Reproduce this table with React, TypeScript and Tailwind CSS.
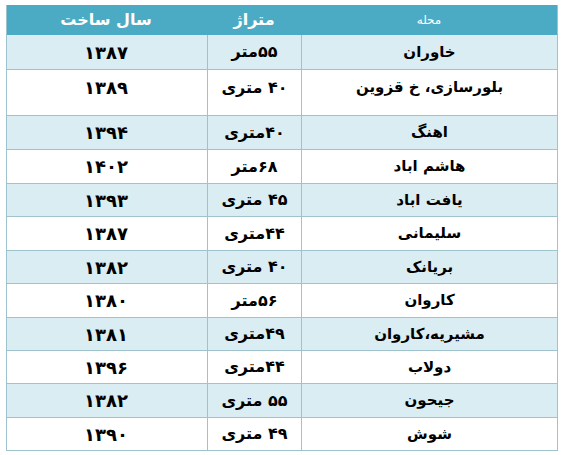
const rows: { area: string; size: string; year: string; h: string; extra?: string }[] = [
  { area: "خاوران", size: "۵۵متر", year: "۱۳۸۷", h: "h-[34px]" },
  { area: "بلورسازی، خ قزوین", size: "۴۰ متری", year: "۱۳۸۹", h: "h-[46px]", extra: "pb-[10px]" },
  { area: "اهنگ", size: "۴۰متری", year: "۱۳۹۴", h: "h-[34px]" },
  { area: "هاشم اباد", size: "۶۸متر", year: "۱۴۰۲", h: "h-[34px]" },
  { area: "یافت اباد", size: "۴۵ متری", year: "۱۳۹۳", h: "h-[33px]" },
  { area: "سلیمانی", size: "۴۴متری", year: "۱۳۸۷", h: "h-[34px]" },
  { area: "بریانک", size: "۴۰ متری", year: "۱۳۸۲", h: "h-[33px]" },
  { area: "کاروان", size: "۵۶متر", year: "۱۳۸۰", h: "h-[34px]" },
  { area: "مشیریه،کاروان", size: "۴۹متری", year: "۱۳۸۱", h: "h-[33px]" },
  { area: "دولاب", size: "۴۴متری", year: "۱۳۹۶", h: "h-[33px]" },
  { area: "جیحون", size: "۵۵ متری", year: "۱۳۸۲", h: "h-[34px]" },
  { area: "شوش", size: "۴۹ متری", year: "۱۳۹۰", h: "h-[33px]" },
];

export default function App() {
  return (
    <div
      className="w-[564px] h-[455px] bg-white pt-[5px] pl-[6px]"
      style={{ fontFamily: '"DejaVu Sans", sans-serif' }}
    >
      <div dir="rtl" className="w-[552px] border-l border-r border-b border-[#9fc3cd]">
        <div className="grid grid-cols-[256px_94px_202px] h-[30px] bg-[#4babc5] text-white">
          <div className="flex items-center justify-center text-[12px]">محله</div>
          <div className="flex items-center justify-center text-[16px] font-bold">متراژ</div>
          <div className="flex items-center justify-center text-[16px] font-bold">سال ساخت</div>
        </div>
        {rows.map((r, i) => (
          <div
            key={i}
            className={`grid grid-cols-[256px_94px_202px] ${r.h} ${i % 2 === 0 ? "bg-[#daedf3]" : "bg-white"} ${i > 0 ? "border-t border-[#9fc3cd]" : ""} font-bold text-black`}
          >
            <div className={`flex items-center justify-center border-l border-[#9fc3cd] text-[15px] ${r.extra ?? ""}`}>{r.area}</div>
            <div className={`flex items-center justify-center border-l border-[#9fc3cd] text-[16px] ${r.extra ?? ""}`}>{r.size}</div>
            <div className={`flex items-center justify-center text-[18px] ${r.extra ?? ""}`}>{r.year}</div>
          </div>
        ))}
      </div>
    </div>
  );
}
